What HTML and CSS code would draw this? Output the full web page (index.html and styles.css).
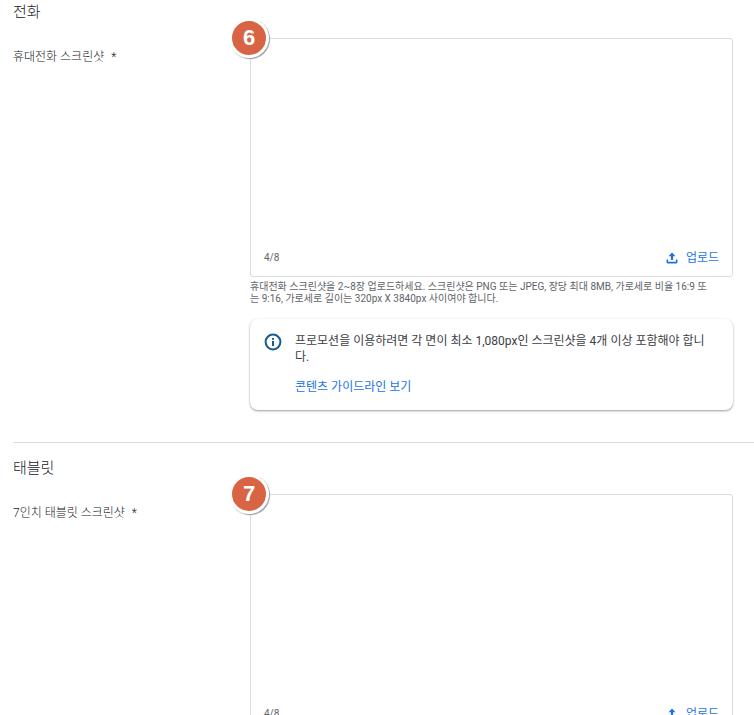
FILE: index.html
```html
<!DOCTYPE html>
<html lang="ko">
<head>
<meta charset="utf-8">
<meta name="viewport" content="width=device-width, initial-scale=1">
<title>스크린샷</title>
<link rel="stylesheet" href="styles.css">
</head>
<body>
<main class="page">
  <section class="section">
    <h2 class="title">전화</h2>
    <div class="row">
      <h3 class="label">휴대전화 스크린샷 <span class="required">*</span></h3>
      <div class="field">
        <div class="dropzone">
          <span class="badge">6</span>
          <span class="count">4/8</span>
          <button class="upload" type="button">
            <svg class="upload-icon" viewBox="0 0 12 12" aria-hidden="true"><path d="M6 .5 2.500 4.200h2.400V8h2.200V4.200h2.400zM.5 7.500v2.500c0 .8.6 1.400 1.400 1.400h8.200c.8 0 1.400-.6 1.400-1.400V7.500H9.900v2.200H2.100V7.500z"/></svg>
            업로드
          </button>
        </div>
        <p class="hint">휴대전화 스크린샷을 2~8장 업로드하세요. 스크린샷은 PNG 또는 JPEG, 장당 최대 8MB, 가로세로 비율 16:9 또는 9:16, 가로세로 길이는 320px X 3840px 사이여야 합니다.</p>
        <div class="notice">
          <svg class="info-icon" viewBox="0 0 18 18" aria-hidden="true"><circle cx="9" cy="9" r="7.400"/><path d="M9 8v5M9 5v1.800"/></svg>
          <div class="notice-body">
            <p class="notice-text">프로모션을 이용하려면 각 면이 최소 1,080px인 스크린샷을 4개 이상 포함해야 합니다.</p>
            <a class="link" href="#">콘텐츠 가이드라인 보기</a>
          </div>
        </div>
      </div>
    </div>
  </section>
  <section class="section">
    <h2 class="title">태블릿</h2>
    <div class="row">
      <h3 class="label">7인치 태블릿 스크린샷 <span class="required">*</span></h3>
      <div class="field">
        <div class="dropzone">
          <span class="badge">7</span>
          <span class="count">4/8</span>
          <button class="upload" type="button">
            <svg class="upload-icon" viewBox="0 0 12 12" aria-hidden="true"><path d="M6 .5 2.500 4.200h2.400V8h2.200V4.200h2.400zM.5 7.500v2.500c0 .8.6 1.400 1.400 1.400h8.200c.8 0 1.400-.6 1.400-1.400V7.500H9.900v2.200H2.100V7.500z"/></svg>
            업로드
          </button>
        </div>
      </div>
    </div>
  </section>
</main>
</body>
</html>
```
FILE: styles.css
```css
* {
  box-sizing: border-box;
}

body {
  margin: 0;
  background: #fff;
  color: #3c4043;
  font-family: Roboto, "Noto Sans CJK KR", sans-serif;
  font-size: 12px;
  line-height: 16px;
}

.page {
  height: 100vh;
  overflow: hidden;
  padding: 1px 0 0 13px;
}

.section + .section {
  margin-top: 32px;
  padding-top: 14px;
  border-top: 1px solid #dadce0;
}

.title {
  margin: 0 0 14px;
  color: #202124;
  font-size: 15px;
  font-weight: 300;
  line-height: 23px;
}

.row {
  display: grid;
  grid-template-columns: 237px minmax(0, 1fr);
  padding-right: 21px;
}

.label {
  margin: 11px 0 0;
  color: #202124;
  font-size: 12px;
  font-weight: 300;
}

.required {
  margin-left: 4px;
}

.dropzone {
  position: relative;
  display: flex;
  align-items: flex-end;
  justify-content: space-between;
  height: 239px;
  padding: 0 13px 10px;
  border: 1px solid #dadce0;
  border-radius: 3px;
}

.badge {
  position: absolute;
  top: -21px;
  left: -22px;
  width: 40px;
  height: 40px;
  border: 3px solid #fff;
  border-radius: 50%;
  background: #d96444;
  box-shadow: 1px 1px 1px #9a9a9a;
  color: #fff;
  font: bold 22px/34px "Liberation Sans", sans-serif;
  text-align: center;
}

.count {
  color: #5f6368;
  font-size: 10px;
}

.upload {
  display: flex;
  align-items: center;
  gap: 8px;
  padding: 0;
  border: 0;
  background: none;
  color: #1a73e8;
  font: inherit;
  cursor: pointer;
}

.upload-icon {
  width: 12px;
  height: 12px;
  fill: currentColor;
}

.hint {
  margin: 4px 0 0;
  padding-right: 20px;
  color: #5f6368;
  font-size: 10px;
  line-height: 12px;
}

.notice {
  display: flex;
  gap: 13px;
  margin-top: 14px;
  padding: 14px 20px 15px 14px;
  border-radius: 8px;
  box-shadow: 0 1px 2px rgba(60, 64, 67, 0.4), 0 1px 3px rgba(60, 64, 67, 0.15);
}

.info-icon {
  flex: none;
  width: 18px;
  height: 18px;
  fill: none;
  stroke: #185a8c;
  stroke-width: 2;
}

.notice-text {
  margin: 0 0 14px;
}

.link {
  color: #1a73e8;
  text-decoration: none;
}
```
